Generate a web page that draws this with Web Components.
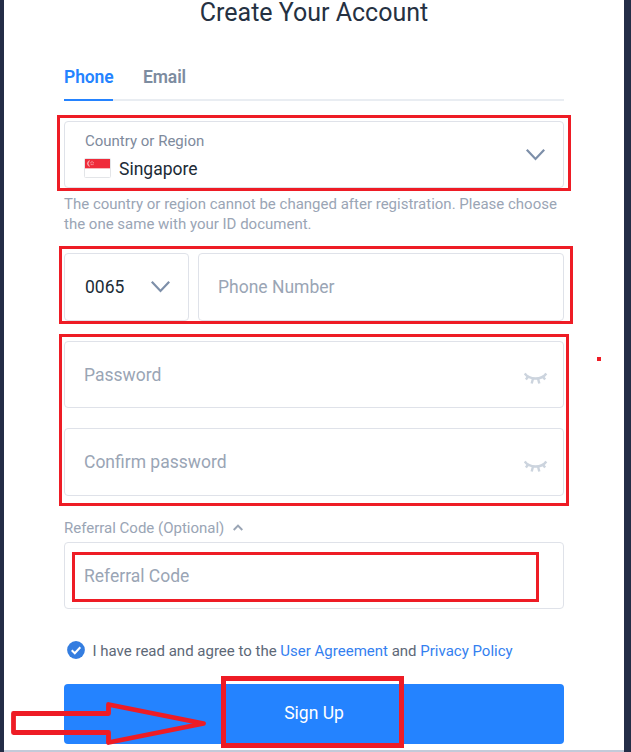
<!DOCTYPE html>
<html lang="en">
<head>
<meta charset="utf-8">
<title>Create Your Account</title>
<style>
html, body { margin: 0; height: 100%; overflow: hidden; background: #fff; }
body { font-family: Roboto, "Liberation Sans", sans-serif; color: #212f3f; }
</style>
</head>
<body>
<signup-page></signup-page>
<script>
function define(name, html) {
  const template = document.createElement('template');
  template.innerHTML = html;
  customElements.define(name, class extends HTMLElement {
    constructor() {
      super();
      this.attachShadow({ mode: 'open' }).append(template.content.cloneNode(true));
    }
  });
}

define('icon-chevron', `
<style>
:host { display: block; width: 20px; height: 14px; color: #7d8fa9; }
:host([up]) { width: 10px; height: 8px; color: #9aa5b5; }
svg { display: block; width: 100%; height: 100%; }
.up { display: none; }
:host([up]) .up { display: block; }
:host([up]) .down { display: none; }
</style>
<svg class="down" viewBox="0 0 20 14" fill="none" stroke="currentColor" stroke-width="2.200"><path d="M1.800 1.700 10.500 11 19.200 1.700"/></svg>
<svg class="up" viewBox="0 0 10 8" fill="none" stroke="currentColor" stroke-width="2"><path d="M.7 6 5 1.600 9.300 6"/></svg>`);

define('icon-eye-closed', `
<style>:host, svg { display: block; width: 24px; height: 14px; }</style>
<svg viewBox="0 0 24 14" fill="none" stroke="#ccd4de" stroke-width="2.400"><path d="M.7 1.500C5.200 8.200 17.800 8.200 22.300 1.500M4.200 4.500 1.900 7.500M9 6.500 7.700 11.500M14 6.500 15.300 11.500M18.800 4.500 21.100 7.500"/></svg>`);

define('icon-check', `
<style>:host, svg { display: block; width: 18px; height: 18px; }</style>
<svg viewBox="0 0 18 18"><circle cx="9" cy="9" r="8.900" fill="#347de0"/><path d="M4.700 9.300 7.800 12.300 13.300 6.300" fill="none" stroke="#fff" stroke-width="2"/></svg>`);

define('flag-singapore', `
<style>:host, svg { display: block; width: 27px; height: 20px; }</style>
<svg viewBox="0 0 27 20"><rect x=".5" y=".5" width="26" height="19" rx="1" fill="#fff" stroke="#e3e5e8"/><path d="M1 1h25v9H1z" fill="#ef2b3a"/><path d="M1 10h25v1H1z" fill="#f7b9bd"/><path d="M5.500 2.500A3.200 3.200 0 0 0 5.500 8.500 4.500 4.500 0 0 1 5.500 2.500" fill="#f9c0c5" stroke="#f9c0c5" stroke-width=".5"/><g fill="#f58b94"><circle cx="8" cy="3.500" r=".7"/><circle cx="6.900" cy="4.800" r=".7"/><circle cx="9.300" cy="4.800" r=".7"/><circle cx="7.300" cy="6.500" r=".7"/><circle cx="8.900" cy="6.500" r=".7"/></g></svg>`);

define('form-tab', `
<style>
:host { display: block; box-sizing: border-box; height: 36px; font-size: 17.5px; line-height: 24px; font-weight: 600; letter-spacing: -.1px; color: #7d8ca0; }
:host([active]) { width: 49px; color: #2483ff; border-bottom: 2px solid #2483ff; }
</style><slot></slot>`);

define('form-tabs', `
<style>:host { display: flex; gap: 30px; height: 36px; background: linear-gradient(#e9edf2, #e9edf2) bottom / 100% 2px no-repeat; }</style>
<slot></slot>`);

define('form-field', `
<style>
:host { display: flex; align-items: center; justify-content: space-between; box-sizing: border-box; height: 67px; padding: 0 15px 0 19px; border: 1px solid #dfe2e9; border-radius: 4px; background: #fff; font-size: 17.5px; line-height: 24px; color: #9aa5b5; }
</style><slot></slot><slot name="icon"></slot>`);

define('country-select', `
<style>
:host { display: flex; justify-content: space-between; align-items: center; box-sizing: border-box; height: 67px; padding: 0 18px 0 20px; border: 1px solid #dfe2e9; border-radius: 4px; }
.label { font-size: 15px; line-height: 20px; color: #7e8a9c; margin-top: 3px; }
.value { display: flex; align-items: center; gap: 8px; margin: 4px 0 0 -1px; font-size: 17.5px; line-height: 26px; color: #202b36; }
.value span { padding-top: 1px; }
flag-singapore { margin-top: -1px; }
</style>
<div><div class="label">Country or Region</div><div class="value"><flag-singapore></flag-singapore><span><slot></slot></span></div></div>
<icon-chevron></icon-chevron>`);

define('submit-button', `
<style>:host { display: flex; align-items: center; justify-content: center; box-sizing: border-box; height: 60px; padding-bottom: 1px; border-radius: 4px; background: #2483ff; color: #fff; font-size: 17.5px; line-height: 21px; }</style>
<slot></slot>`);

/* Hand-drawn red marks laid over the form. */
define('red-marks', `
<style>:host { position: absolute; inset: 0 auto auto -4px; pointer-events: none; } svg { display: block; width: 631px; height: 752px; }</style>
<svg viewBox="0 0 631 752" fill="none" stroke="#ee1c25" stroke-width="3">
<rect x="58.500" y="116.500" width="511" height="73"/>
<rect x="60.500" y="247.500" width="511" height="75"/>
<rect x="60.500" y="335.500" width="507" height="169"/>
<rect x="73.500" y="553.500" width="464" height="47"/>
<rect x="223.500" y="678.500" width="178" height="67" stroke-width="5"/>
<path d="M13.500 713.500H108.500V704.500L203.500 723.500 108.500 742.500V732.500H13.500Z" stroke-width="4.800" stroke-linejoin="round"/>
<rect x="597" y="357" width="4" height="4" fill="#ee1c25" stroke="none"/>
</svg>`);

define('signup-page', `
<style>
:host { position: relative; display: block; box-sizing: border-box; width: 631px; height: 752px; background: #fff; border: solid #242d47; border-width: 0 7px 0 4px; padding: 0 60px; overflow: hidden; }
h1 { margin: 0; height: 28px; font-size: 25px; line-height: 26px; font-weight: 400; text-align: center; color: #253142; }
form-tabs { margin-top: 37px; }
country-select { margin-top: 20px; }
.hint { margin: 6px 0 0; font-size: 15px; line-height: 20px; color: #9aa5b5; white-space: nowrap; }
.phone { display: grid; grid-template-columns: 125px 366px; gap: 9px; margin-top: 19px; }
.phone form-field { height: 68px; }
.code { color: #202b36; padding-left: 20px; padding-right: 18px; }
.passwords { display: grid; gap: 20px; margin-top: 20px; }
.passwords form-field:last-child { height: 68px; }
icon-eye-closed { margin-top: 9px; }
.ref { display: flex; align-items: center; gap: 9px; height: 20px; margin-top: 22px; font-size: 15px; color: #9aa5b5; }
.referral { margin-top: 4px; }
.agree { display: flex; align-items: center; gap: 7.5px; height: 20px; margin: 31px 0 0 3px; font-size: 15px; color: #5d6877; white-space: nowrap; }
.agree span { padding-top: 2px; }
a { color: #347ff0; }
submit-button { margin-top: 24px; }
.foot { position: absolute; left: -4px; right: -7px; bottom: 0; height: 2px; background: #c3cad9; }
</style>
<h1>Create Your Account</h1>
<form-tabs><form-tab active>Phone</form-tab><form-tab>Email</form-tab></form-tabs>
<country-select>Singapore</country-select>
<div class="hint">The country or region cannot be changed after registration. Please choose<br>the one same with your ID document.</div>
<div class="phone"><form-field class="code">0065<icon-chevron slot="icon"></icon-chevron></form-field><form-field>Phone Number</form-field></div>
<div class="passwords"><form-field>Password<icon-eye-closed slot="icon"></icon-eye-closed></form-field><form-field>Confirm password<icon-eye-closed slot="icon"></icon-eye-closed></form-field></div>
<div class="ref"><span>Referral Code (Optional)</span><icon-chevron up></icon-chevron></div>
<form-field class="referral">Referral Code</form-field>
<div class="agree"><icon-check></icon-check><span>I have read and agree to the <a>User Agreement</a> and <a>Privacy Policy</a></span></div>
<submit-button>Sign Up</submit-button>
<div class="foot"></div>
<red-marks></red-marks>`);
</script>
</body>
</html>
